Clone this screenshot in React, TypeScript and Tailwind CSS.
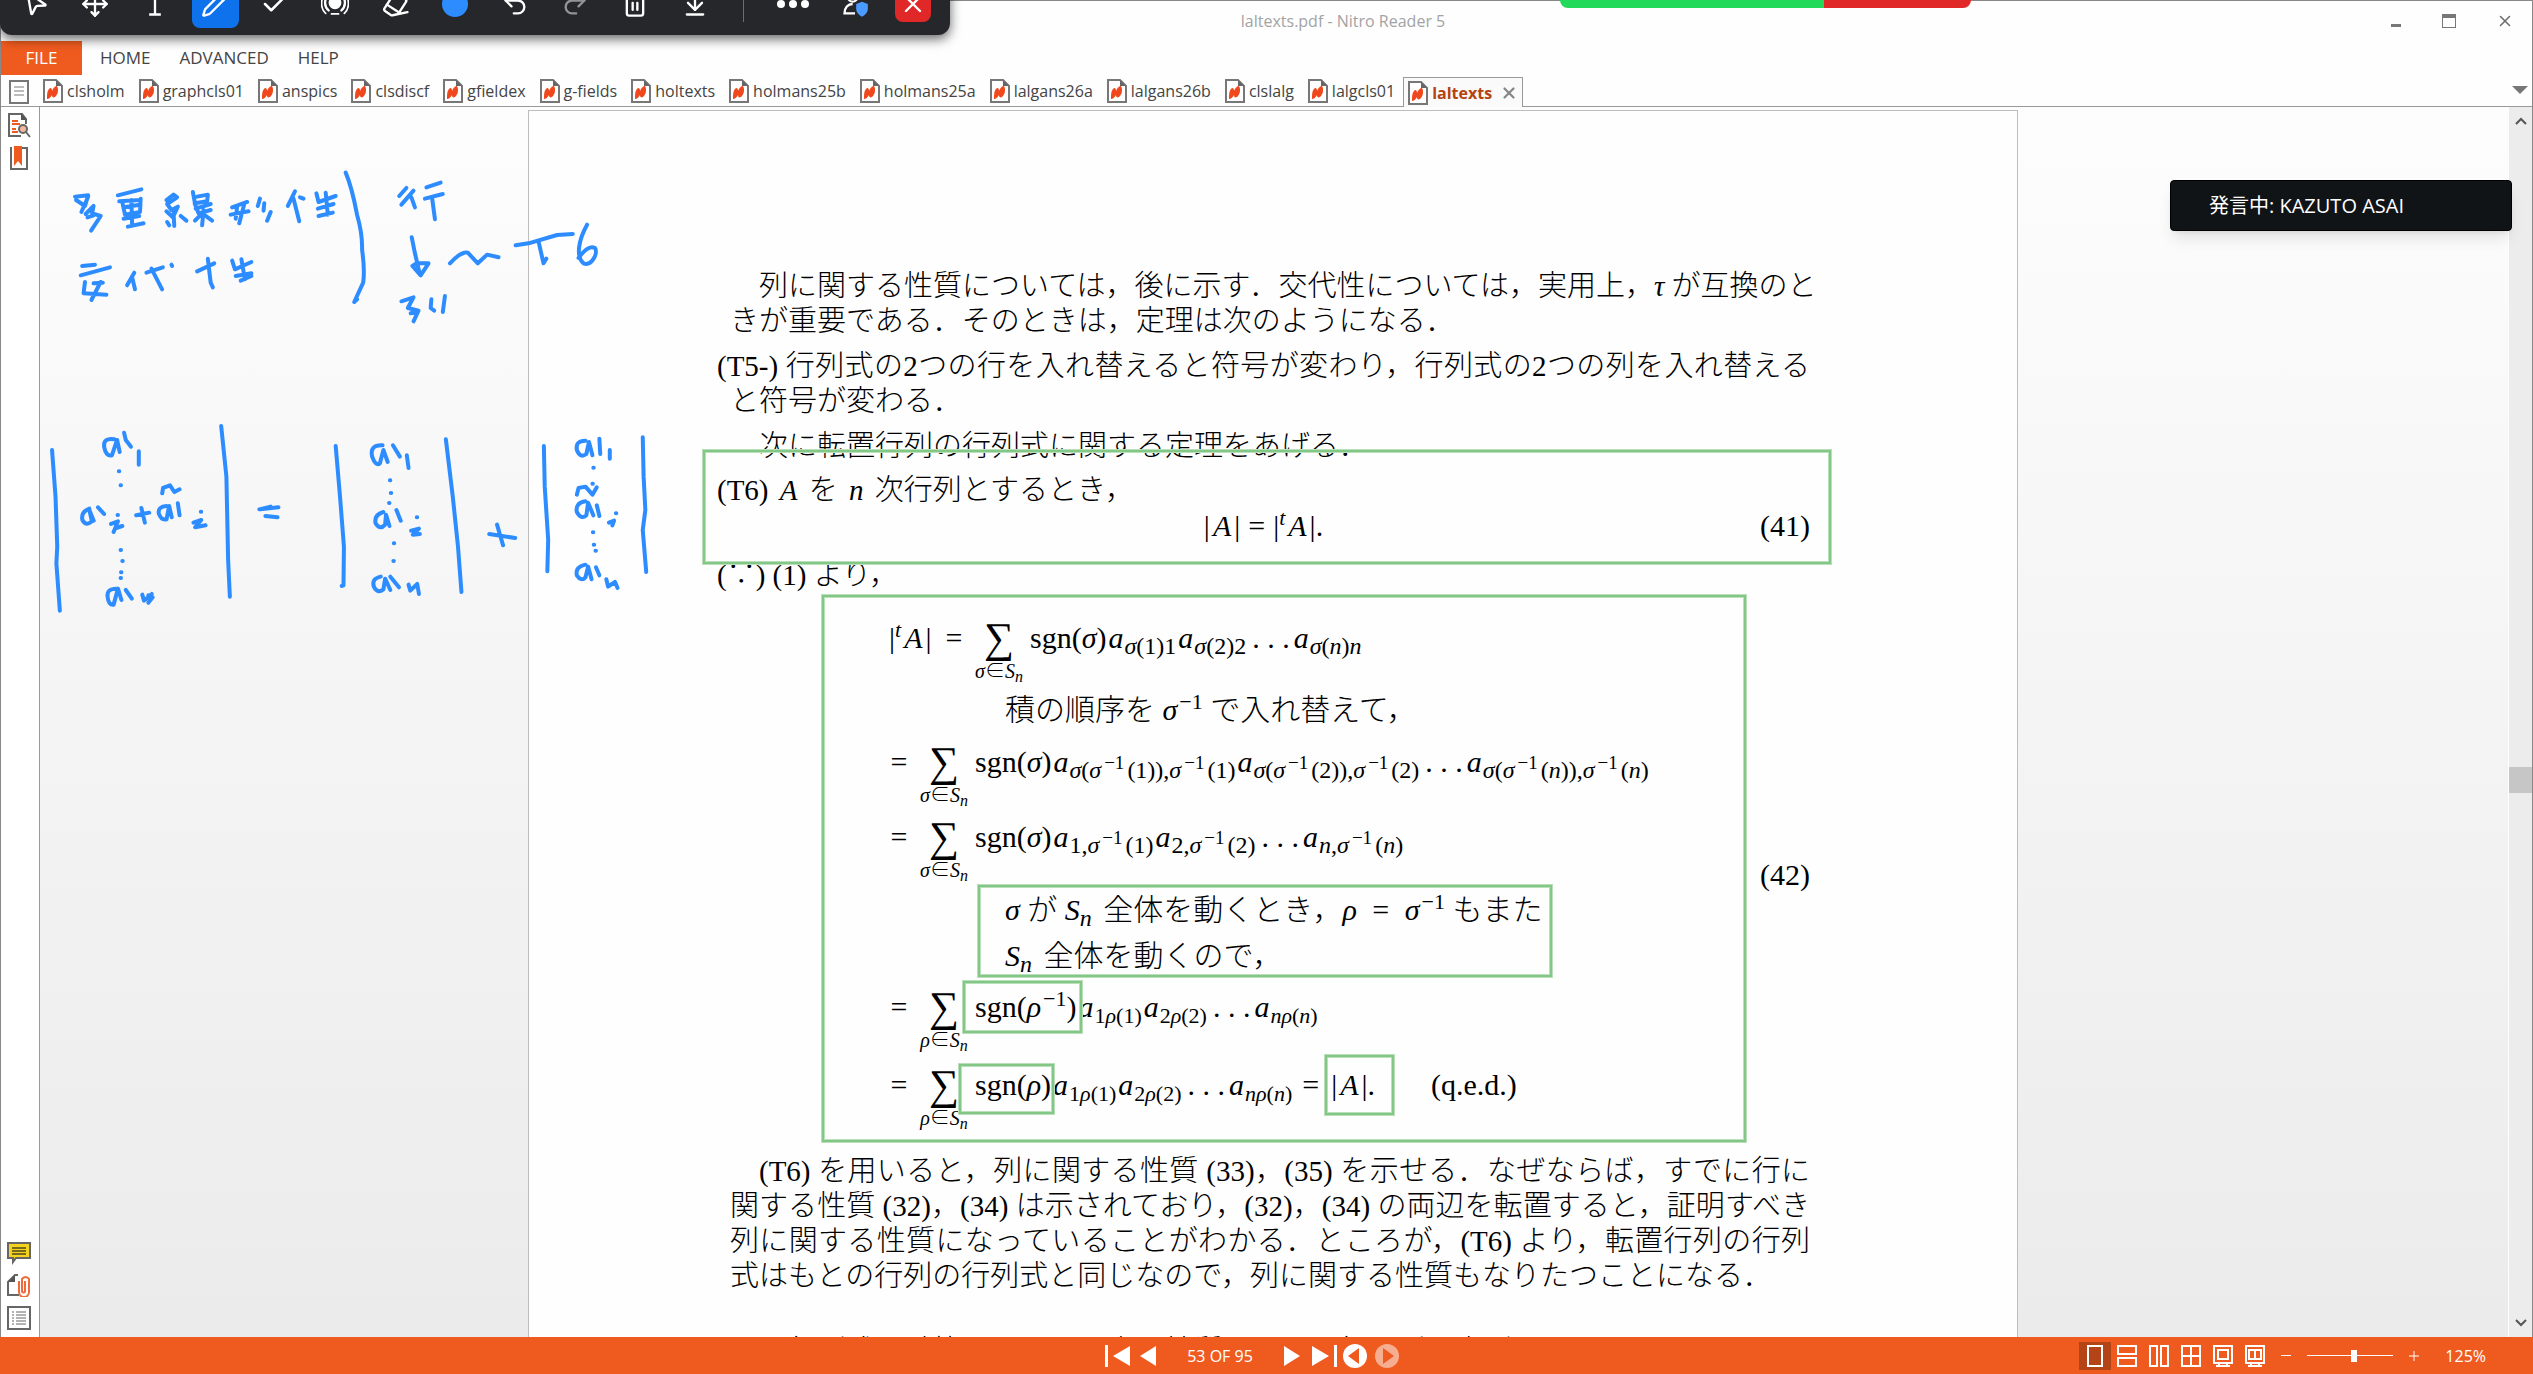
import { useState, type ReactNode } from "react"
import { clsx } from "clsx"
import { ArrowDownToLine, Check, Eraser, MousePointer2, Move, Pencil, Redo2, Trash2, Undo2, X } from "lucide-react"

const documents = [
  "clsholm",
  "graphcls01",
  "anspics",
  "clsdiscf",
  "gfieldex",
  "g-fields",
  "holtexts",
  "holmans25b",
  "holmans25a",
  "lalgans26a",
  "lalgans26b",
  "clslalg",
  "lalgcls01",
  "laltexts",
]

/* ---------- icons ---------- */

function TextCursorIcon() {
  return (
    <svg viewBox="0 0 24 24" className="size-7" fill="none" stroke="currentColor" strokeWidth="2">
      <path d="M7 3h10M12 3v18M7 21h10" />
    </svg>
  )
}

function SpotlightIcon() {
  return (
    <svg viewBox="0 0 24 24" className="size-7" fill="none" stroke="currentColor" strokeWidth="2" strokeLinecap="round">
      <circle cx="12" cy="11" r="4.5" fill="currentColor" />
      <path d="M6.5 17.5a8.5 8.5 0 1 1 11 0" />
      <path d="M4 20a12 12 0 0 1 0-17M20 20a12 12 0 0 0 0-17M9 20.500h6" strokeWidth="1.500" />
    </svg>
  )
}

function PersonShieldIcon() {
  return (
    <svg viewBox="0 0 24 24" className="size-7" fill="none" stroke="currentColor" strokeWidth="2">
      <circle cx="10" cy="6" r="4" />
      <path d="M12 20H3c0-5 3-8 7-8" />
      <path d="M18 10l5 2v4c0 3-2 5-5 7-3-2-5-4-5-7v-4z" fill="#4a9bff" stroke="none" />
    </svg>
  )
}

function PdfIcon() {
  return (
    <svg viewBox="0 0 20 24" className="h-6 w-5 shrink-0">
      <path d="M1 1h12l6 6v16H1z" fill="#fff" stroke="#777" strokeWidth="2" />
      <path d="M13 1v6h6z" fill="#666" />
      <path d="M4 20c0-4 0-9 3-11 2 0 2 2 2 3 1-3 3-5 5-5 2 3 1 9-2 11-2 1-3 0-3-2-1 2-3 4-5 4z" fill="#f0471c" />
    </svg>
  )
}

function PagesIcon() {
  return (
    <svg viewBox="0 0 22 26" className="h-[26px] w-[22px]" fill="none" stroke="#777" strokeWidth="2">
      <path d="M2 2h18v22H2z" />
      <path d="M6 8h10M6 12h10M6 16h10" stroke="#bbb" />
    </svg>
  )
}

function SearchPageIcon() {
  return (
    <svg viewBox="0 0 24 26" className="h-[26px] w-6" fill="none" stroke="#666" strokeWidth="2">
      <path d="M14 24H2V2h13l4 5v5" />
      <path d="M14 1v7h6z" fill="#555" stroke="none" />
      <path d="M5 9h6M5 12h8M5 17h4M5 20h6" stroke="#ef5b1f" />
      <circle cx="16" cy="17" r="4" fill="#f5b79e" />
      <path d="M19 20l4 5" />
    </svg>
  )
}

function BookmarkIcon() {
  return (
    <svg viewBox="0 0 22 26" className="h-[26px] w-[22px]" fill="none" stroke="#666" strokeWidth="2">
      <path d="M4 3H3v21h16V3h-5" />
      <path d="M6 1h8v20l-4-5-4 5z" fill="#ef5b1f" stroke="none" />
    </svg>
  )
}

function CommentIcon() {
  return (
    <svg viewBox="0 0 24 24" className="size-6" stroke="#666" strokeWidth="2">
      <path d="M1 2h22v15H9l-3 4v-4H1z" fill="#f5d21b" />
      <path d="M5 7h14M5 10h14M5 13h14" stroke="#776a1c" />
    </svg>
  )
}

function AttachmentIcon() {
  return (
    <svg viewBox="0 0 24 24" className="size-6" fill="none" stroke="#666" strokeWidth="2">
      <path d="M11 2H8L1 9v13h11" />
      <path d="M8 2v7H1z" fill="#555" stroke="none" />
      <path d="M12 8v11a3 3 0 0 0 10 0V6a4 4 0 0 0-7 0v12a1 1 0 0 0 3 0V8" stroke="#ef6a3a" />
    </svg>
  )
}

function OutputIcon() {
  return (
    <svg viewBox="0 0 24 26" className="h-[26px] w-6" fill="none" stroke="#666" strokeWidth="2">
      <path d="M1 2h22v22H1z" />
      <path d="M9 7h10M9 10h10M9 13h10M9 16h10M9 19h10M5 7h2M5 10h2M5 13h2M5 16h2M5 19h2" strokeWidth="1" />
    </svg>
  )
}

/* ---------- maths ---------- */

function I({ children }: { children: ReactNode }) {
  return <i>{children}</i>
}

// variable standing between words of running text
function Var({ children }: { children: ReactNode }) {
  return <i className="mx-1">{children}</i>
}

function Eq() {
  return <span className="mx-2">=</span>
}

function Sub({ children, small }: { children: ReactNode; small?: boolean }) {
  return <sub className={clsx("mr-0.5 ml-px", small ? "text-[22px]" : "text-[24px]")}>{children}</sub>
}

// exponent -1 on the main line
function Inv() {
  return <sup className="ml-0.5 text-[22px]">−1</sup>
}

// exponent -1 inside a subscript
function SubInv() {
  return <sup className="px-[3px] text-[19px]">−1</sup>
}

function Sn() {
  return (
    <span className="mr-1">
      <I>S</I>
      <sub className="text-[24px] italic">n</sub>
    </span>
  )
}

function Dots() {
  return <span className="px-1">. . .</span>
}

function Sgn({ children }: { children: ReactNode }) {
  return <span className="mr-0.5">sgn({children})</span>
}

function Sum({ index }: { index: string }) {
  return (
    <span className="mr-1.5 ml-2.5 flex w-[50px] flex-col items-center">
      <span className="text-[42px] leading-9">∑</span>
      <span className="mt-[3px] text-[20px] leading-6 whitespace-nowrap">
        <I>{index}</I>∈<I>S</I>
        <sub className="text-[16px] italic">n</sub>
      </span>
    </span>
  )
}

function Row({ className, index, lead, children }: { className: string; index: string; lead?: ReactNode; children: ReactNode }) {
  return (
    <div className={clsx("flex items-start whitespace-nowrap", className)}>
      {lead && <span className="w-[55px]">{lead}</span>}
      <span className="w-5 text-center">=</span>
      <Sum index={index} />
      <span>{children}</span>
    </div>
  )
}

function Bars({ transposed }: { transposed?: boolean }) {
  return (
    <>
      |{transposed && <sup className="text-[22px] italic">t</sup>}
      <i className="mx-[3px]">A</i>|
    </>
  )
}

function Lines({ lines, className }: { lines: ReactNode[]; className?: string }) {
  return (
    <p className={className}>
      {lines.map((line, i) => (
        <span key={i} className="block whitespace-nowrap [text-align-last:justify] first:pl-[var(--first)] last:[text-align-last:left]">
          {line}
        </span>
      ))}
    </p>
  )
}

function DocumentPage() {
  return (
    <article className="w-[1490px] shrink-0 border-t border-r border-l border-[#bdbdbd] bg-[#fefefe] pt-[158px] pr-[207px] pl-[188px] font-['Liberation_Serif','Noto_Sans_CJK_JP',serif] text-[29px] leading-[35px] font-light text-black">
      <Lines
        className="pl-[13px] [--first:29px]"
        lines={[
          <>列に関する性質については，後に示す．交代性については，実用上，<I>τ</I> が互換のと</>,
          "きが重要である．そのときは，定理は次のようになる．",
        ]}
      />
      <Lines
        className="mt-[10px] [--first:0px]"
        lines={[
          "(T5-) 行列式の2つの行を入れ替えると符号が変わり，行列式の2つの列を入れ替える",
          <span className="pl-[13px]">と符号が変わる．</span>,
        ]}
      />
      <p className="mt-[10px] pl-[42px]">次に転置行列の行列式に関する定理をあげる．</p>
      <p className="mt-[9px]">
        (T6) <Var>A</Var> を <Var>n</Var> 次行列とするとき，
      </p>
      <div className="grid grid-cols-[1fr_auto_1fr] text-[30px]">
        <span className="col-start-2">
          <Bars />
          <Eq />
          <Bars transposed />.
        </span>
        <span className="justify-self-end">(41)</span>
      </div>
      <p className="mt-[15px]">(∵) (1) より，</p>

      <div className="mt-[27px] flex items-center justify-between pl-[172px] text-[30px] leading-9">
        <div>
          <Row className="h-[72px]" index="σ" lead={<Bars transposed />}>
            <Sgn><I>σ</I></Sgn><I>a</I><Sub><I>σ</I>(1)1</Sub><I>a</I><Sub><I>σ</I>(2)2</Sub><Dots /><I>a</I><Sub><I>σ</I>(<I>n</I>)<I>n</I></Sub>
          </Row>
          <p className="h-[52px] pl-[116px]">
            積の順序を <I>σ</I><Inv /> で入れ替えて，
          </p>
          <Row className="h-[75px]" index="σ">
            <Sgn><I>σ</I></Sgn><I>a</I><Sub><I>σ</I>(<I>σ</I><SubInv />(1)),<I>σ</I><SubInv />(1)</Sub>
            <I>a</I><Sub><I>σ</I>(<I>σ</I><SubInv />(2)),<I>σ</I><SubInv />(2)</Sub><Dots />
            <I>a</I><Sub><I>σ</I>(<I>σ</I><SubInv />(<I>n</I>)),<I>σ</I><SubInv />(<I>n</I>)</Sub>
          </Row>
          <Row className="h-[73px]" index="σ">
            <Sgn><I>σ</I></Sgn><I>a</I><Sub>1,<I>σ</I><SubInv />(1)</Sub><I>a</I><Sub>2,<I>σ</I><SubInv />(2)</Sub><Dots />
            <I>a</I><Sub><I>n</I>,<I>σ</I><SubInv />(<I>n</I>)</Sub>
          </Row>
          <p className="h-[46px] pl-[116px]">
            <I>σ</I> が <Sn /> 全体を動くとき，<I>ρ</I> <Eq /> <I>σ</I><Inv /> もまた
          </p>
          <p className="h-[51px] pl-[116px]">
            <Sn /> 全体を動くので，
          </p>
          <Row className="h-[78px]" index="ρ">
            <Sgn><I>ρ</I><Inv /></Sgn><I>a</I><Sub small>1<I>ρ</I>(1)</Sub><I>a</I><Sub small>2<I>ρ</I>(2)</Sub><Dots /><I>a</I><Sub small><I>nρ</I>(<I>n</I>)</Sub>
          </Row>
          <Row className="h-[62px]" index="ρ">
            <Sgn><I>ρ</I></Sgn><I>a</I><Sub small>1<I>ρ</I>(1)</Sub><I>a</I><Sub small>2<I>ρ</I>(2)</Sub><Dots /><I>a</I><Sub small><I>nρ</I>(<I>n</I>)</Sub>
            <Eq />
            <span className="ml-1"><Bars /></span>.
            <span className="pl-14">(q.e.d.)</span>
          </Row>
        </div>
        <span>(42)</span>
      </div>

      <Lines
        className="mt-[25px] pl-[13px] [--first:29px]"
        lines={[
          "(T6) を用いると，列に関する性質 (33)，(35) を示せる．なぜならば，すでに行に",
          "関する性質 (32)，(34) は示されており，(32)，(34) の両辺を転置すると，証明すべき",
          "列に関する性質になっていることがわかる．ところが，(T6) より，転置行列の行列",
          "式はもとの行列の行列式と同じなので，列に関する性質もなりたつことになる．",
        ]}
      />
      <p className="mt-[40px] pl-[71px] whitespace-nowrap">行列式を計算するには，次の性質を用いて行や列を変形するとよい．</p>
    </article>
  )
}

/* ---------- pen strokes and frames drawn over the document ---------- */

const frames = [
  { x: 704, y: 451, width: 1126, height: 112 },
  { x: 823, y: 596, width: 922, height: 545 },
  { x: 979, y: 886, width: 572, height: 90 },
  { x: 964, y: 982, width: 117, height: 50 },
  { x: 960, y: 1065, width: 93, height: 48 },
  { x: 1326, y: 1056, width: 67, height: 58 },
]

const notes = [
  // 多重線形代性
  "M210 290L247 286L238 318L213 300M247 290L228 336M240 342L262 318L258 340L282 348L255 392M245 352L262 346",
  "M330 286L396 268M334 304L394 300M342 304L350 344L392 336L394 296M346 322L392 314M368 300L370 376M346 356L390 348M358 380L402 370",
  "M466 300L486 284L496 292L468 312L480 330L498 320L484 352L466 334M486 340L488 378M468 366L474 376M506 348L522 362",
  "M540 276L546 310L580 304L582 284L552 290M548 326L590 312M545 310L556 340L590 330M570 330L566 376M546 362L566 340M574 346L594 362",
  "M650 322L692 306M646 344L696 334M664 320L660 356M684 312L670 370M728 296L722 318M740 310L738 332M758 336L748 362",
  "M826 274L806 318M822 296L838 364M840 292L850 296M886 280L892 306L940 288M890 326L934 312M912 278L918 344M892 348L932 338",
  // 交代性
  "M230 498L266 494M226 526L308 502M238 546L234 580L298 584M282 546L256 600M262 550L288 548",
  "M376 518L356 556M370 532L378 568M410 518L456 502M424 506L454 568M480 494L482 498",
  "M552 514L600 490M582 476L590 548L596 562M650 482L658 508L704 486M660 528L704 520M676 478L686 538M674 542L704 528",
  // bracket, 行, arrow, 列, T6
  "M968 218Q985 260 1000 345Q1015 400 1014 450Q1022 510 1017 548L992 606L1000 598",
  "M1138 264L1118 288M1158 272L1124 314M1152 292L1162 322M1194 262L1234 248M1190 296L1240 282M1210 294L1218 358",
  "M1153 412L1162 460L1176 524M1155 498L1166 490L1200 490L1178 526L1155 498",
  "M1260 490Q1290 455 1310 458L1338 490L1364 464L1396 472",
  "M1124 604L1158 592L1142 624L1172 632L1158 664M1150 640L1168 636M1208 598L1206 624L1216 632M1246 588L1240 636",
  "M1444 436L1480 430L1560 405L1604 402M1508 424L1522 490L1530 476",
  "M1644 374C1620 420 1612 470 1634 490C1656 500 1676 460 1666 444C1650 434 1632 456 1620 474",
]

const determinants = [
  "M120 150L128 290L132 440L130 490L138 632M510 78L522 230L526 480L530 590",
  "M264 118Q238 112 240 140Q244 170 258 166L270 120L276 156M286 98L290 120L302 140M320 154L320 194",
  "M274 214h1M278 256h1M278 450h1M282 483h1M279 517h1M278 534h1",
  "M206 326Q186 336 190 360Q198 380 212 364L206 330L216 362M226 322L240 342M271 345h1M256 372L272 364L262 396M268 384L282 378",
  "M314 346L344 338M326 324L334 368M374 280L376 264L392 256L402 276L414 268",
  "M384 318Q364 320 366 340Q372 362 384 358L390 318L396 352M410 310L414 346M463 335h1M446 368L464 360L450 382L474 376",
  "M598 328L624 320M600 328L642 322M612 348L640 352",
  "M268 566Q246 566 248 590Q250 616 262 614L272 566L280 600M290 570L304 596M328 584L332 602L350 582M342 586L352 592L342 608",
  "M774 138L784 290L793 440L792 556L788 558M1028 118L1044 290L1056 440L1064 576",
  "M882 136Q852 134 858 170Q866 200 876 190L884 150L894 186M906 136L922 170M938 166L942 204",
  "M899 241h1M901 279h1M897 309h1M908 430h1M907 483h1",
  "M884 336Q862 344 866 370Q876 392 888 374L890 344L898 378M914 330L924 362M961 352h1M948 392L966 386L952 404L968 402",
  "M878 530Q856 536 862 560Q870 582 884 568L888 536L900 570M900 530L920 562M942 554L946 572L962 552L966 582",
  "M1128 402L1188 414M1146 374L1160 436",
  "M1254 138L1256 260L1264 420L1262 514M1482 112L1484 230L1488 330L1482 390L1490 516",
  "M1350 122Q1326 122 1330 150Q1338 176 1352 162L1358 126L1366 166M1382 116L1384 162M1406 150L1406 176",
  "M1368 203h1M1366 251h1M1367 397h1M1369 434h1M1373 452h1",
  "M1330 284L1334 264L1350 260L1366 284L1376 262",
  "M1350 304Q1326 308 1330 336Q1340 360 1352 346L1356 308L1368 346M1376 316L1382 348M1420 340h1M1404 368L1416 362L1412 376",
  "M1350 494Q1326 500 1330 526Q1340 546 1350 532L1356 500L1364 538M1374 502L1382 526M1398 538L1402 560L1418 546L1424 564",
]

function AnnotationLayer() {
  return (
    <svg viewBox="0 0 2533 1374" className="pointer-events-none absolute top-0 left-0 h-[1374px] w-[2533px]" fill="none">
      {frames.map((f) => (
        <g key={`${f.x}-${f.y}`}>
          <rect {...f} stroke="#b9e0bb" strokeWidth="4" />
          <rect {...f} stroke="#82c785" strokeWidth="2" />
        </g>
      ))}
      <g stroke="#2d8cff" strokeWidth="4" strokeLinecap="round" strokeLinejoin="round">
        <g transform="translate(0 100) scale(.3571 .3333)">
          {notes.map((d) => (
            <path key={d} d={d} vectorEffect="non-scaling-stroke" />
          ))}
        </g>
        <g transform="translate(0 400) scale(.4337 .3333)">
          {determinants.map((d) => (
            <path key={d} d={d} vectorEffect="non-scaling-stroke" />
          ))}
        </g>
      </g>
    </svg>
  )
}

/* ---------- chrome ---------- */

function DrawingToolbar() {
  const tools = [
    { label: "Select", icon: <MousePointer2 size={28} className="rotate-12" /> },
    { label: "Move", icon: <Move size={28} /> },
    { label: "Text", icon: <TextCursorIcon /> },
    { label: "Draw", icon: <Pencil size={28} />, active: true },
    { label: "Stamp", icon: <Check size={30} /> },
    { label: "Spotlight", icon: <SpotlightIcon /> },
    { label: "Eraser", icon: <Eraser size={28} className="-rotate-12" /> },
    { label: "Colour", icon: <span className="size-[26px] rounded-full bg-[#2d8cff]" /> },
    { label: "Undo", icon: <Undo2 size={28} /> },
    { label: "Redo", icon: <Redo2 size={28} className="opacity-50" /> },
    { label: "Clear", icon: <Trash2 size={28} /> },
    { label: "Save", icon: <ArrowDownToLine size={28} /> },
  ]
  return (
    <div className="absolute top-[-27px] left-0 flex h-[62px] w-[950px] items-center rounded-b-xl bg-[#25272b] pl-[5px] text-white shadow-[0_4px_12px_rgba(0,0,0,0.6)]">
      {tools.map((tool) => (
        <div key={tool.label} className="flex w-[60px] justify-center">
          <button
            aria-label={tool.label}
            className={clsx("flex h-12 w-[47px] items-center justify-center rounded-lg", tool.active && "bg-[#0e72ed]")}
          >
            {tool.icon}
          </button>
        </div>
      ))}
      <span className="ml-[18px] h-9 w-px bg-[#6b6d71]" />
      <button aria-label="More" className="ml-[33px] flex gap-1">
        <span className="size-2 rounded-full bg-white" />
        <span className="size-2 rounded-full bg-white" />
        <span className="size-2 rounded-full bg-white" />
      </button>
      <button aria-label="Participants" className="ml-8">
        <PersonShieldIcon />
      </button>
      <button aria-label="Close" className="ml-[26px] flex size-9 items-center justify-center rounded-lg bg-[#e02828]">
        <X size={28} />
      </button>
    </div>
  )
}

function TitleBar() {
  return (
    <header className="flex h-10 items-center text-[#6b6b6b]">
      <h1 className="flex-1 pl-[294px] text-center text-base text-[#a3a3a3]">laltexts.pdf - Nitro Reader 5</h1>
      <div className="flex w-[141px] items-center justify-between pr-[18px]">
        <button aria-label="Minimise" className="mt-2 h-[3px] w-2.5 bg-[#777]" />
        <button aria-label="Maximise" className="h-3.5 w-3.5 border border-t-4 border-[#777]" />
        <button aria-label="Close window">
          <X size={18} />
        </button>
      </div>
    </header>
  )
}

function MenuBar() {
  return (
    <nav className="flex h-[34px] items-center text-[17px] text-[#444]">
      <button className="h-full w-[81px] bg-[#ef5b1f] text-white">FILE</button>
      <button className="ml-[18px]">HOME</button>
      <button className="ml-[29px]">ADVANCED</button>
      <button className="ml-[29px]">HELP</button>
    </nav>
  )
}

function TabStrip() {
  const [current, setCurrent] = useState("laltexts")
  return (
    <div className="flex h-8 items-end border-b border-[#999] pl-9">
      {documents.map((name) => (
        <div
          key={name}
          className={clsx(
            "flex h-[30px] items-center",
            name === current ? "-mb-px border border-b-0 border-[#999] bg-[#fafafa] pr-1 pl-1" : "mr-2 pl-1.5",
          )}
        >
          <button onClick={() => setCurrent(name)} className="flex items-center gap-1">
            <PdfIcon />
            <span className={name === current ? "font-bold text-[#b5430f]" : "text-[#444]"}>{name}</span>
          </button>
          {name === current && (
            <button aria-label={`Close ${name}`} className="ml-2">
              <X size={18} strokeWidth={3} className="text-[#888]" />
            </button>
          )}
        </div>
      ))}
      <button aria-label="All tabs" className="mr-1 mb-3 ml-auto border-x-8 border-t-8 border-x-transparent border-t-[#777]" />
    </div>
  )
}

function SideBar() {
  return (
    <aside className="flex w-[38px] shrink-0 flex-col items-center justify-between bg-white pr-[3px] pb-[6px]">
      <div className="-mt-[28px] flex flex-col items-center gap-[7px]">
        <button aria-label="Pages"><PagesIcon /></button>
        <button aria-label="Search"><SearchPageIcon /></button>
        <button aria-label="Bookmarks"><BookmarkIcon /></button>
      </div>
      <div className="flex flex-col items-center gap-2">
        <button aria-label="Comments"><CommentIcon /></button>
        <button aria-label="Attachments"><AttachmentIcon /></button>
        <button aria-label="Output"><OutputIcon /></button>
      </div>
    </aside>
  )
}

function ScrollBar() {
  return (
    <div className="flex w-6 shrink-0 flex-col items-center border-l border-white bg-[#ececec] text-[#555]">
      <svg viewBox="0 0 12 8" className="mt-2.5 h-2 w-3" fill="none" stroke="currentColor" strokeWidth="2">
        <path d="M1 7l5-5 5 5" />
      </svg>
      <span className="mt-[642px] h-[26px] w-full bg-[#c6c6c6]" />
      <svg viewBox="0 0 12 8" className="mt-auto mb-2.5 h-2 w-3" fill="none" stroke="currentColor" strokeWidth="2">
        <path d="M1 1l5 5 5-5" />
      </svg>
    </div>
  )
}

const layouts = [
  { label: "Single page", d: "M5 3h14v20H5z" },
  { label: "Continuous", d: "M3 3h18v8H3zM3 15h18v8H3z" },
  { label: "Facing", d: "M3 3h7v20H3zM14 3h7v20h-7z" },
  { label: "Continuous facing", d: "M3 3h18v20H3zM3 13h18M12 3v20" },
  { label: "Full screen", d: "M3 3h18v17H3zM7 7h10v9H7zM8 20v3M16 20v3M5 23h14" },
  { label: "Slides", d: "M3 3h18v17H3zM6 7h12v9H6zM12 7v9M8 20v3M16 20v3M5 23h14" },
]

function StatusBar() {
  return (
    <footer className="grid h-[37px] shrink-0 grid-cols-[1fr_auto_1fr] items-center bg-[#ef5b1f] text-base text-white">
      <div className="col-start-2 flex items-center pr-[29px]">
        <button aria-label="First page">
          <svg viewBox="0 0 26 24" className="h-6 w-[26px]" fill="currentColor"><path d="M0 1h3v22H0zM25 2v20L8 12z" /></svg>
        </button>
        <button aria-label="Previous page" className="ml-2">
          <svg viewBox="0 0 18 24" className="h-6 w-[18px]" fill="currentColor"><path d="M17 2v20L1 12z" /></svg>
        </button>
        <span className="w-[126px] text-center">53 OF 95</span>
        <button aria-label="Next page">
          <svg viewBox="0 0 18 24" className="h-6 w-[18px]" fill="currentColor"><path d="M1 2v20l16-10z" /></svg>
        </button>
        <button aria-label="Last page" className="ml-2.5">
          <svg viewBox="0 0 26 24" className="h-6 w-[26px]" fill="currentColor"><path d="M23 1h3v22h-3zM1 2v20l17-10z" /></svg>
        </button>
        <button aria-label="Back" className="ml-1.5">
          <svg viewBox="0 0 24 24" className="size-6"><circle cx="12" cy="12" r="12" fill="#fff" /><path d="M16 4v16L5 12z" fill="#ef5b1f" /></svg>
        </button>
        <button aria-label="Forward" className="ml-2 opacity-50">
          <svg viewBox="0 0 24 24" className="size-6"><circle cx="12" cy="12" r="12" fill="#fff" /><path d="M8 4v16l11-8z" fill="#ef5b1f" /></svg>
        </button>
      </div>
      <div className="flex items-center justify-self-end pr-[47px]">
        {layouts.map((l, i) => (
          <button key={l.label} aria-label={l.label} className={clsx("flex h-7 w-8 items-center justify-center", i === 0 && "bg-[#b24418]")}>
            <svg viewBox="0 0 24 26" className="h-[26px] w-6" fill="none" stroke="currentColor" strokeWidth="2">
              <path d={l.d} />
            </svg>
          </button>
        ))}
        <button aria-label="Zoom out" className="ml-2.5 h-px w-2.5 bg-white" />
        <input
          type="range"
          aria-label="Zoom"
          min={0}
          max={100}
          defaultValue={54}
          className="mx-4 h-3 w-[86px] appearance-none bg-[linear-gradient(#fff,#fff)] bg-[length:100%_1px] bg-center bg-no-repeat [&::-webkit-slider-thumb]:h-3 [&::-webkit-slider-thumb]:w-1.5 [&::-webkit-slider-thumb]:appearance-none [&::-webkit-slider-thumb]:bg-white"
        />
        <button aria-label="Zoom in">
          <svg viewBox="0 0 10 10" className="size-2.5" stroke="currentColor"><path d="M0 5h10M5 0v10" /></svg>
        </button>
        <span className="ml-[26px]">125%</span>
      </div>
    </footer>
  )
}

export default function App() {
  return (
    <div className="relative flex h-screen flex-col overflow-hidden bg-[#fefefe] font-['Open_Sans','Noto_Sans_CJK_JP',sans-serif] text-base">
      <div className="flex min-h-0 flex-1 flex-col border-x border-t border-[#888]">
        <TitleBar />
        <MenuBar />
        <TabStrip />
        <div className="flex min-h-0 flex-1">
          <SideBar />
          <main className="flex min-w-0 flex-1 justify-center overflow-hidden border-l border-[#999] bg-linear-to-b from-[#fdfdfd] to-[#ebebeb] pt-[3px] pr-0.5">
            <DocumentPage />
          </main>
          <ScrollBar />
        </div>
      </div>
      <StatusBar />
      <AnnotationLayer />

      <DrawingToolbar />
      <div className="absolute top-0 left-[1560px] flex h-2 w-[411px] overflow-hidden rounded-b-lg">
        <span className="w-[264px] bg-[#23d959]" />
        <span className="flex-1 bg-[#e02828]" />
      </div>
      <div className="absolute top-[180px] right-[21px] flex h-[51px] w-[342px] items-center rounded-sm border border-black bg-[#111417] pl-[38px] text-xl text-white shadow-lg">
        発言中: KAZUTO ASAI
      </div>
    </div>
  )
}
